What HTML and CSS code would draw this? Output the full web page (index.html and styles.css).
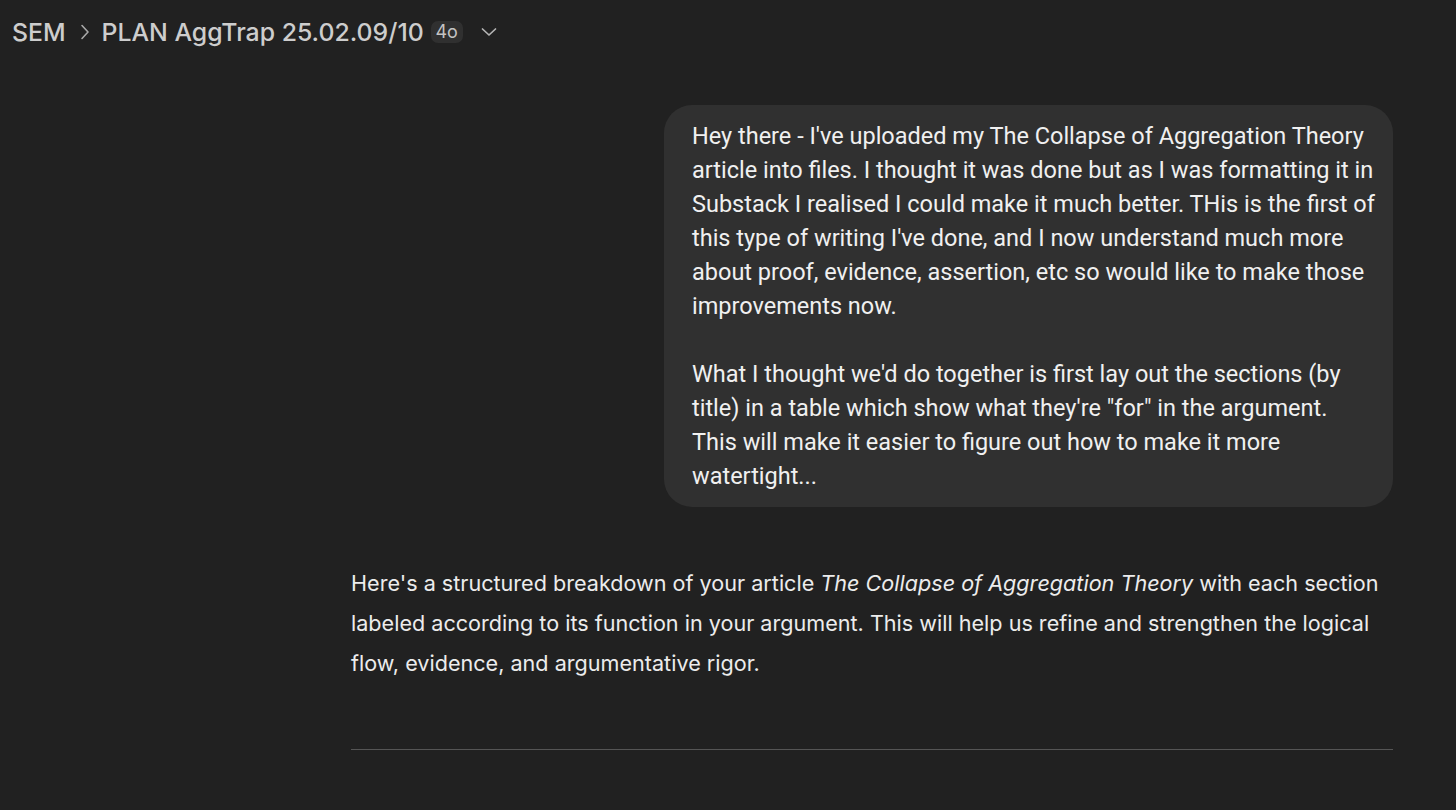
FILE: index.html
```html
<!DOCTYPE html>
<html>
<head>
<meta charset="utf-8">
<link rel="stylesheet" href="styles.css">
</head>
<body>
<header class="topbar">
  <span class="crumb">SEM</span>
  <svg class="sep" width="10" height="16" viewBox="0 0 10 16"><path d="M2 1.5 L8 8 L2 14.5" fill="none" stroke="#a8a8a8" stroke-width="1.6" stroke-linecap="round" stroke-linejoin="round"/></svg>
  <span class="crumb">PLAN AggTrap 25.02.09/10</span>
  <span class="badge">4o</span>
  <svg class="caret" width="18" height="12" viewBox="0 0 18 12"><path d="M2.5 3 L9 9 L15.5 3" fill="none" stroke="#b4b4b4" stroke-width="1.7" stroke-linecap="round" stroke-linejoin="round"/></svg>
</header>
<main class="thread">
  <div class="user-row">
    <div class="bubble">
      <p>Hey there - I've uploaded my The Collapse of Aggregation Theory<br>article into files. I thought it was done but as I was formatting it in<br>Substack I realised I could make it much better. THis is the first of<br>this type of writing I've done, and I now understand much more<br>about proof, evidence, assertion, etc so would like to make those<br>improvements now.</p>
      <p>What I thought we'd do together is first lay out the sections (by<br>title) in a table which show what they're "for" in the argument.<br>This will make it easier to figure out how to make it more<br>watertight...</p>
    </div>
  </div>
  <div class="assistant">
    <p>Here's a structured breakdown of your article <em>The Collapse of Aggregation Theory</em> with each section<br>labeled according to its function in your argument. This will help us refine and strengthen the logical<br>flow, evidence, and argumentative rigor.</p>
  </div>
  <hr class="rule">
</main>
</body>
</html>
```
FILE: styles.css
```css
html, body {
  margin: 0;
  padding: 0;
  background: #212121;
  height: 100%;
  overflow: hidden;
}
body {
  font-family: Inter, "Liberation Sans", sans-serif;
  color: #ececec;
}
.topbar {
  display: flex;
  align-items: center;
  height: 64px;
  padding-left: 12px;
  box-sizing: border-box;
  color: #cdcdcd;
}
.crumb {
  font-size: 24.8px;
  font-weight: 500;
}
.sep {
  margin: 0 12px 0 14px;
}
.badge {
  margin-left: 7px;
  background: #303030;
  color: #c4c4c4;
  font-size: 18px;
  border-radius: 7px;
  width: 32px;
  height: 22px;
  line-height: 22px;
  text-align: center;
}
.caret {
  margin-left: 17px;
}
.thread {
  width: 1042px;
  margin-left: 351px;
  padding-top: 41px;
}
.user-row {
  display: flex;
  justify-content: flex-end;
}
.bubble {
  width: 729px;
  box-sizing: border-box;
  background: #303030;
  border-radius: 28px;
  padding: 14px 20px 14px 28px;
  font-family: Roboto, "Liberation Sans", sans-serif;
  font-size: 23.5px;
  line-height: 34px;
  color: #f0f0f0;
  white-space: nowrap;
}
.bubble p {
  margin: 0;
}
.bubble p + p {
  margin-top: 34px;
}
.assistant {
  margin-top: 56px;
  font-size: 21.6px;
  line-height: 40px;
  color: #ececec;
}
.assistant p {
  margin: 0;
}
.rule {
  margin: 66px 0 0 0;
  border: 0;
  border-top: 1px solid #555555;
  height: 0;
}
```
